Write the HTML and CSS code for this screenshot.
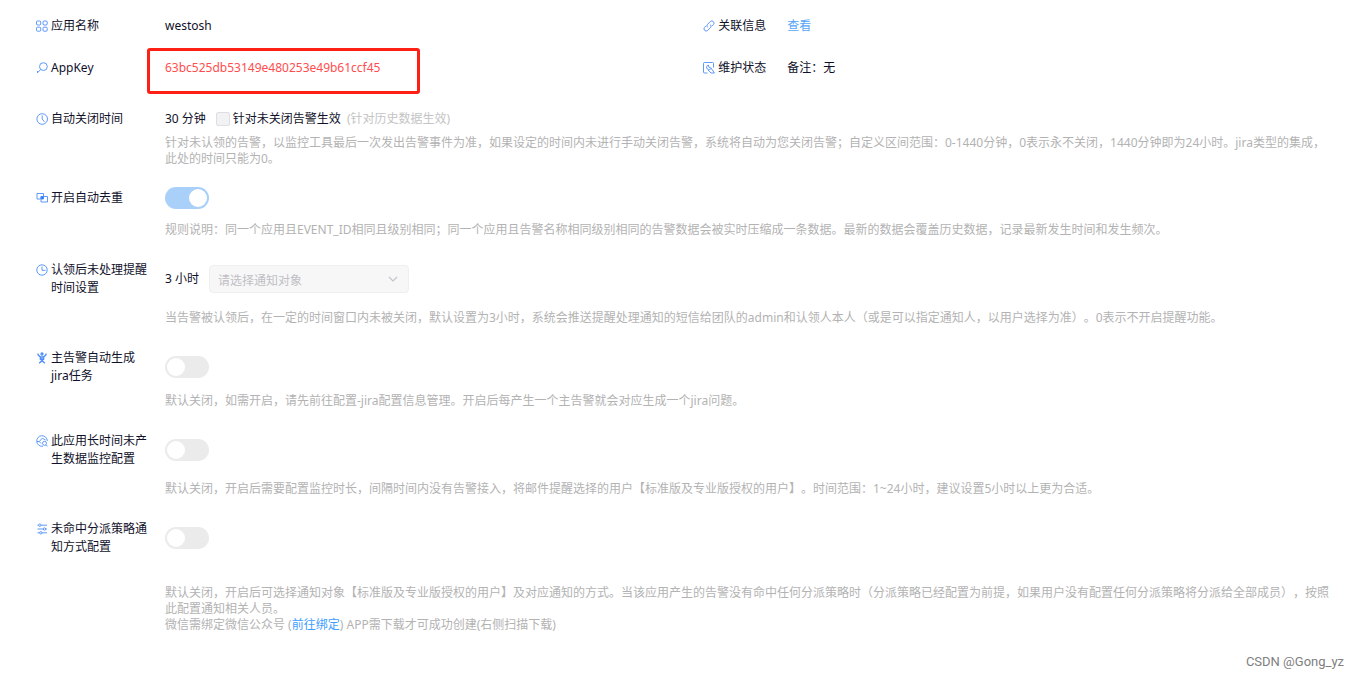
FILE: index.html
```
<!DOCTYPE html>
<html lang="zh-CN">
<head>
    <meta charset="UTF-8">
    <meta name="viewport" content="width=device-width, initial-scale=1.0">
    <title>应用配置</title>
    <link rel="stylesheet" href="styles.css">
</head>
<body>
    <main class="page">
        <!-- Basic info -->
        <section class="info">
            <div class="info-item">
                <div class="label">
                    <svg class="icon" viewBox="0 0 12 12"><rect x="0.5" y="1" width="4.2" height="4" rx="1"/><rect x="7" y="1" width="4.2" height="4" rx="1"/><rect x="0.5" y="7.2" width="4.2" height="4" rx="1"/><rect x="7" y="7.2" width="4.2" height="4" rx="1"/></svg>
                    <span>应用名称</span>
                </div>
                <div>westosh</div>
            </div>
            <div class="info-item info-right">
                <div class="label">
                    <svg class="icon" viewBox="0 0 12 12"><path d="M4.6 7.4a2.2 2.2 0 0 1 0-3.1L7.4 1.5a2.2 2.2 0 0 1 3.1 3.1L9 6.1"/><path d="M7.4 4.6a2.2 2.2 0 0 1 0 3.1l-2.8 2.8a2.2 2.2 0 0 1-3.1-3.1L3 5.9"/></svg>
                    <span>关联信息</span>
                </div>
                <a class="view-link" href="#">查看</a>
            </div>
            <div class="info-item">
                <div class="label">
                    <svg class="icon" viewBox="0 0 12 12"><circle cx="7.4" cy="4.6" r="3.9"/><path d="M4.6 7.5L1.5 10.8M1.5 9v2"/></svg>
                    <span>AppKey</span>
                </div>
                <div class="app-key">63bc525db53149e480253e49b61ccf45</div>
            </div>
            <div class="info-item info-right">
                <div class="label">
                    <svg class="icon" viewBox="0 0 12 12"><path d="M4.5 11H1.5a1 1 0 0 1-1-1V1.5a1 1 0 0 1 1-1H9.5a1 1 0 0 1 1 1V5.5"/><path d="M5.2 3a2.4 2.4 0 1 0 3 3.2L11.4 11M5.4 3l.4 2.2 2.4 1M5 8l3 3h3.4"/></svg>
                    <span>维护状态</span>
                </div>
                <div>备注：无</div>
            </div>
        </section>

        <!-- Settings -->
        <section class="setting setting-short">
            <div class="label">
                <svg class="icon" viewBox="0 0 12 12"><circle cx="6.2" cy="6" r="5.3"/><path d="M6.2 2.5V6l2.3 2.8"/></svg>
                <span>自动关闭时间</span>
            </div>
            <div class="control">
                <span>30 分钟</span>
                <label class="check"><input type="checkbox" disabled>针对未关闭告警生效</label>
                <span class="note">(针对历史数据生效)</span>
            </div>
            <p class="help help-tight">针对未认领的告警，以监控工具最后一次发出告警事件为准，如果设定的时间内未进行手动关闭告警，系统将自动为您关闭告警；自定义区间范围：0-1440分钟，0表示永不关闭，1440分钟即为24小时。jira类型的集成，此处的时间只能为0。</p>
        </section>

        <section class="setting setting-short">
            <label class="label" for="dedup">
                <svg class="icon" viewBox="0 0 12 12"><path d="M4.5 7H1V1.5h6.5V4M5 4.5h6.5V10H5z"/><path class="solid" d="M5 4.5h2.5V7H5z"/></svg>
                <span>开启自动去重</span>
            </label>
            <div class="control"><input class="switch" type="checkbox" id="dedup" checked disabled></div>
            <p class="help">规则说明：同一个应用且EVENT_ID相同且级别相同；同一个应用且告警名称相同级别相同的告警数据会被实时压缩成一条数据。最新的数据会覆盖历史数据，记录最新发生时间和发生频次。</p>
        </section>

        <section class="setting">
            <label class="label" for="target">
                <svg class="icon" viewBox="0 0 12 12"><circle cx="6" cy="6" r="5.2"/><path d="M6 2.5V6.3h3.5"/></svg>
                <span>认领后未处理提醒时间设置</span>
            </label>
            <div class="control">
                <span>3 小时</span>
                <div class="select-box">
                    <select id="target" disabled>
                        <option>请选择通知对象</option>
                    </select>
                    <svg class="arrow" viewBox="0 0 10 10"><path d="M1 3l4 4 4-4"/></svg>
                </div>
            </div>
            <p class="help">当告警被认领后，在一定的时间窗口内未被关闭，默认设置为3小时，系统会推送提醒处理通知的短信给团队的admin和认领人本人（或是可以指定通知人，以用户选择为准）。0表示不开启提醒功能。</p>
        </section>

        <section class="setting">
            <label class="label" for="jira">
                <svg class="icon icon-bold" viewBox="0 0 12 12"><circle cx="6" cy="2" r="1"/><path d="M2 1.5v1.2L4.3 5h3.4L10 2.7V1.5M4.3 5v2h3.4V5M4.3 7l4.5 4.2M7.7 7l-4.5 4.2"/></svg>
                <span>主告警自动生成jira任务</span>
            </label>
            <div class="control"><input class="switch" type="checkbox" id="jira" disabled></div>
            <p class="help help-close">默认关闭，如需开启，请先前往配置-jira配置信息管理。开启后每产生一个主告警就会对应生成一个jira问题。</p>
        </section>

        <section class="setting">
            <label class="label" for="monitor">
                <svg class="icon" viewBox="0 0 12 12"><path d="M7 11.2A5.3 5.3 0 1 1 11.3 6"/><path d="M1 6.5h2.3L6.2 3.2 9.5 5M3.3 6.5L5 8.5"/><circle cx="8.5" cy="8.3" r="2"/><path d="M10 9.8l1.6 1.6"/></svg>
                <span>此应用长时间未产生数据监控配置</span>
            </label>
            <div class="control"><input class="switch" type="checkbox" id="monitor" disabled></div>
            <p class="help">默认关闭，开启后需要配置监控时长，间隔时间内没有告警接入，将邮件提醒选择的用户【标准版及专业版授权的用户】。时间范围：1~24小时，建议设置5小时以上更为合适。</p>
        </section>

        <section class="setting">
            <label class="label" for="notify">
                <svg class="icon" viewBox="0 0 12 12"><path d="M1.5 2.2h1M5 2.2h6M1.5 6h5.7M9.7 6H11M1.5 9.8h2M6 9.8h5"/><circle cx="3.8" cy="2.2" r="1.2"/><circle cx="8.5" cy="6" r="1.2"/><circle cx="4.8" cy="9.8" r="1.2"/></svg>
                <span>未命中分派策略通知方式配置</span>
            </label>
            <div class="control"><input class="switch" type="checkbox" id="notify" disabled></div>
            <div class="help help-far">
                <p>默认关闭，开启后可选择通知对象【标准版及专业版授权的用户】及对应通知的方式。当该应用产生的告警没有命中任何分派策略时（分派策略已经配置为前提，如果用户没有配置任何分派策略将分派给全部成员），按照此配置通知相关人员。</p>
                <p>微信需绑定微信公众号 (<a href="#">前往绑定</a>) APP需下载才可成功创建(右侧扫描下载)</p>
            </div>
        </section>
    </main>

    <footer class="credit">CSDN @Gong_yz</footer>
</body>
</html>
```
FILE: styles.css
```
* {
    box-sizing: border-box;
}

body {
    margin: 0;
    background-color: #fff;
    color: #10102a;
    font-family: "Noto Sans", "Noto Sans CJK SC", sans-serif;
    font-size: 12px;
    line-height: 18px;
    text-spacing-trim: space-all;
}

p {
    margin: 0;
}

a {
    color: #409eff;
    text-decoration: none;
}

.page {
    padding: 17px 25px 0 36px;
}

.info {
    display: grid;
    grid-template-columns: 51.4% 1fr;
    row-gap: 24px;
    margin-bottom: 31px;
}

.info-item {
    display: grid;
    grid-template-columns: 129px 1fr;
}

.info-right {
    grid-template-columns: 84px 1fr;
}

.label {
    display: flex;
    align-items: flex-start;
    gap: 3px;
}

.label span {
    max-width: 98px;
}

.icon {
    flex: none;
    width: 12px;
    height: 12px;
    margin-top: 3px;
    fill: none;
    stroke: #4d8df8;
    stroke-width: 0.9;
}

.icon-bold {
    stroke-width: 1.3;
}

.icon .solid {
    fill: #1677ff;
}

.view-link {
    color: #55a5f7;
}

.app-key {
    position: relative;
    color: #ff4d4f;
}

/* red frame lies over the key */
.app-key::after {
    content: "";
    position: absolute;
    box-sizing: border-box;
    top: -11px;
    left: -18px;
    width: 273px;
    height: 46px;
    border: 3px solid #ff2015;
    border-radius: 3px;
}

.setting {
    display: grid;
    grid-template-columns: 129px 1fr;
    align-items: center;
    margin-top: 23px;
}

.setting-short {
    margin-top: 20px;
}

.control {
    display: flex;
    align-items: center;
    gap: 10px;
    min-height: 22px;
}

.help {
    grid-column: 2;
    margin-top: 13px;
    color: #b3b3b3;
    line-height: 16px;
}

.help-tight {
    margin-top: 5px;
}

.help-close {
    margin-top: 8px;
}

.help-far {
    margin-top: 29px;
}

.check {
    display: flex;
    align-items: center;
    gap: 3px;
}

.check input {
    appearance: none;
    width: 14px;
    height: 14px;
    margin: 0;
    border: 1px solid #dcdfe6;
    border-radius: 2px;
    background-color: #f2f2f2;
}

.note {
    margin-left: -4px;
    color: #c4c4c4;
}

.switch {
    appearance: none;
    width: 44px;
    height: 22px;
    margin: 0;
    padding: 2px;
    border-radius: 11px;
    background-color: #ebebeb;
}

.switch::before {
    content: "";
    display: block;
    width: 18px;
    height: 18px;
    border-radius: 50%;
    background-color: #fff;
}

.switch:checked {
    background-color: #a9d0f9;
}

.switch:checked::before {
    margin-left: auto;
}

.select-box {
    position: relative;
    width: 200px;
}

.select-box select {
    appearance: none;
    display: block;
    width: 100%;
    height: 28px;
    padding: 3px 8px 0;
    border: 1px solid #efefef;
    border-radius: 4px;
    background-color: #f7f7f7;
    color: #bfbfc4;
    font: inherit;
    opacity: 1;
}

.arrow {
    position: absolute;
    top: 9px;
    right: 11px;
    width: 10px;
    height: 10px;
    fill: none;
    stroke: #c0c4cc;
    stroke-width: 1.2;
}

.credit {
    margin-top: 20px;
    padding-right: 15px;
    color: #808080;
    font-family: Roboto, sans-serif;
    font-size: 13px;
    text-align: right;
}
```
